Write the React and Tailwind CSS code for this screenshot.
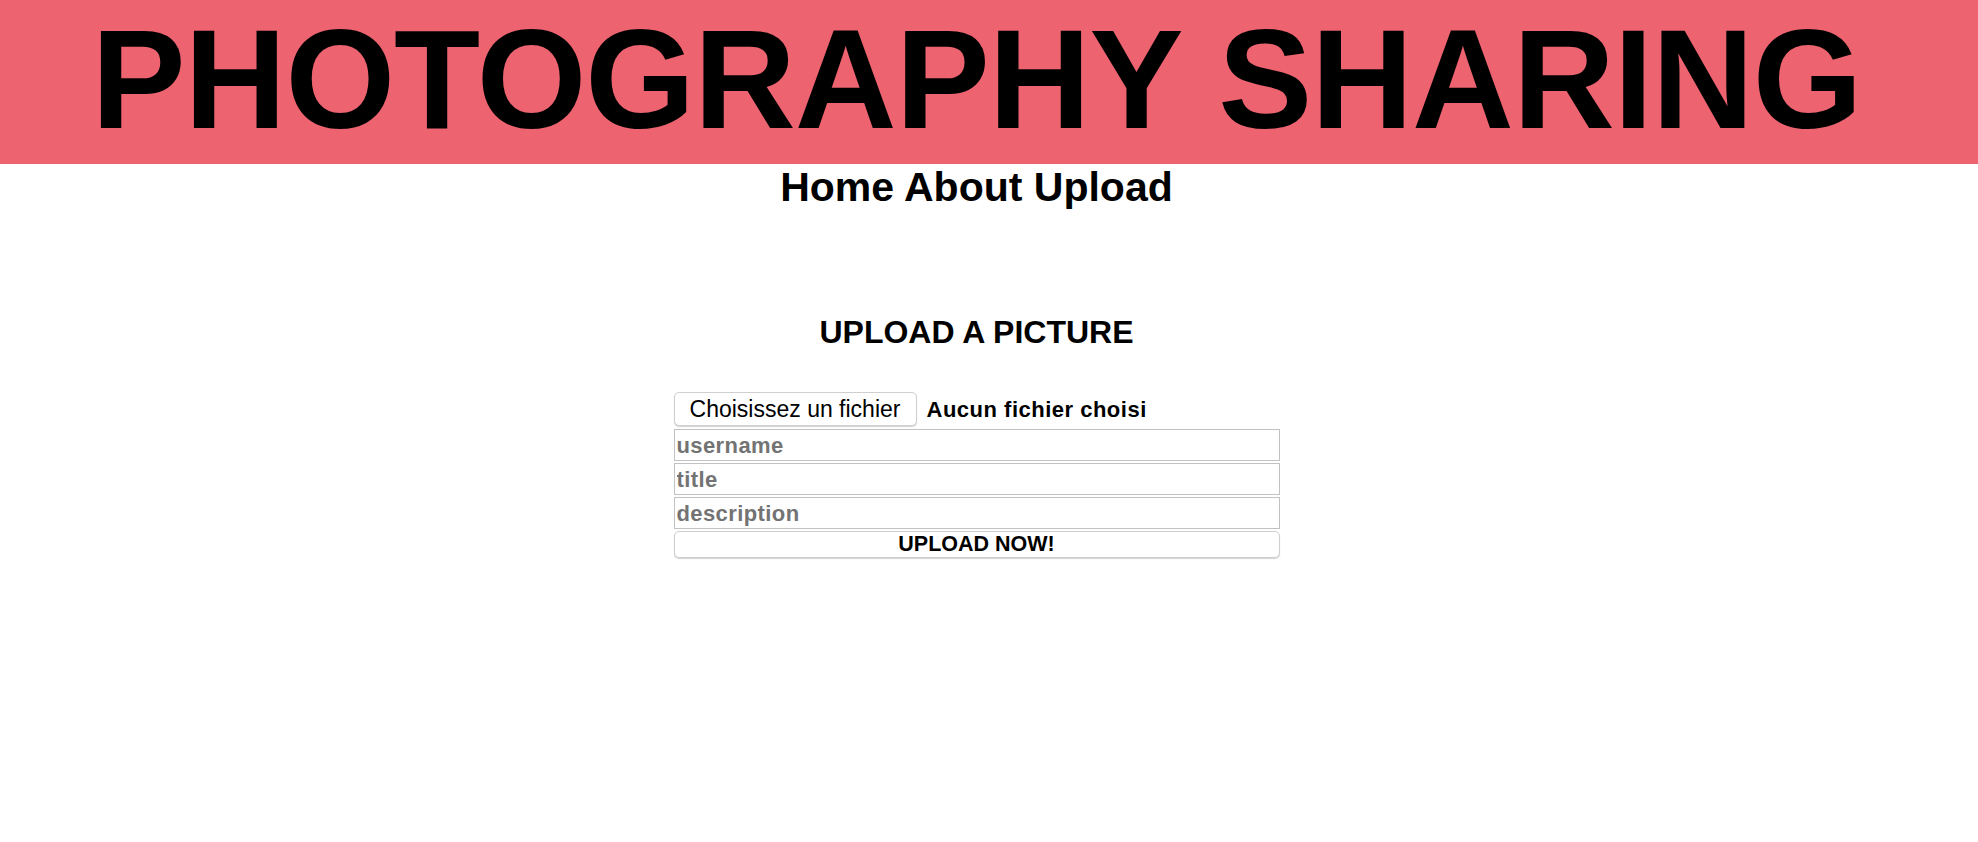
import React from "react";

const display = { fontFamily: '"Liberation Sans", Arial, sans-serif' };

function Field({ placeholder }) {
  return (
    <input
      type="text"
      placeholder={placeholder}
      className="block h-[32px] w-full border border-[#c2c2c2] bg-white px-[2px] text-[22px] font-bold tracking-[0.4px] text-black outline-none placeholder:text-[#737373]"
      style={display}
    />
  );
}

function App() {
  return (
    <div className="min-h-[842px] w-full bg-white text-black" style={display}>
      <header className="h-[164px] w-full bg-[#ee6370]">
        <div className="w-[1953px]">
          <h1 className="text-center text-[141px] font-bold leading-[158px] tracking-[-1px]">
            PHOTOGRAPHY SHARING
          </h1>
        </div>
      </header>

      <div className="w-[1953px]">
        <nav className="text-center text-[41px] font-bold leading-[47px]">
          <a href="#">Home</a> <a href="#">About</a> <a href="#">Upload</a>
        </nav>

        <h2 className="mt-[103px] text-center text-[32px] font-bold leading-[37px]">
          UPLOAD A PICTURE
        </h2>

        <form className="mx-auto mt-[41px] flex w-[606px] flex-col" onSubmit={(e) => e.preventDefault()}>
          <div className="flex h-[34px] items-center gap-[10px]">
            <button
              type="button"
              className="flex h-[34px] w-[243px] items-center justify-center rounded-[5px] border border-[#cfcfcf] bg-white text-[23px] shadow-[0_1px_1px_rgba(0,0,0,0.18)]"
            >
              Choisissez un fichier
            </button>
            <span className="text-[22px] font-bold tracking-[0.5px]">Aucun fichier choisi</span>
          </div>
          <div className="mt-[3px] flex flex-col gap-[2px]">
            <Field placeholder="username" />
            <Field placeholder="title" />
            <Field placeholder="description" />
            <button
              type="submit"
              className="h-[27px] w-full rounded-[5px] border border-[#cfcfcf] bg-white text-[21.5px] font-bold leading-none shadow-[0_1px_1px_rgba(0,0,0,0.18)]"
            >
              UPLOAD NOW!
            </button>
          </div>
        </form>
      </div>
    </div>
  );
}

export default App;
